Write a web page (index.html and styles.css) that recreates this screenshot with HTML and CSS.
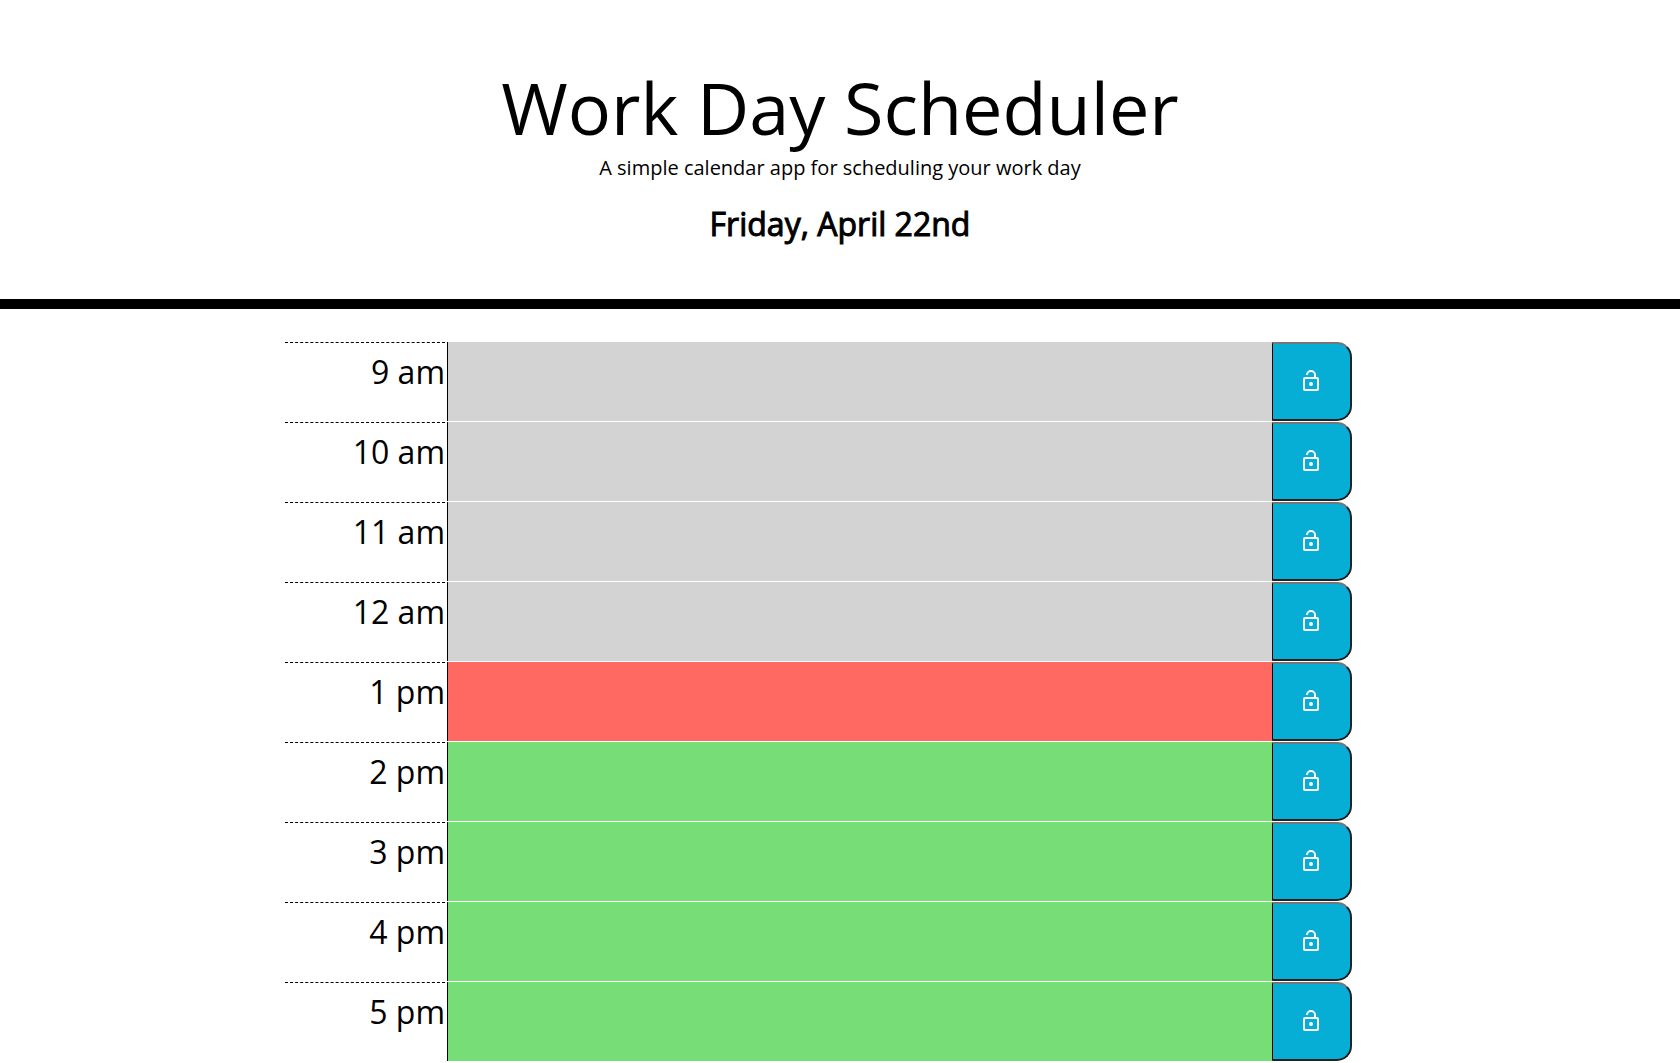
FILE: index.html
```html
<!DOCTYPE html>
<html lang="en">
<head>
<meta charset="utf-8">
<meta name="viewport" content="width=device-width, initial-scale=1">
<title>Work Day Scheduler</title>
<link rel="stylesheet" href="styles.css">
</head>
<body>
<svg class="sprite">
  <symbol id="lock-open" viewBox="0 0 24 24">
    <path fill="currentColor" d="M12 17a2 2 0 1 0 0-4 2 2 0 0 0 0 4zm6-9h-1V6a5 5 0 0 0-10 0h2a3 3 0 0 1 6 0v2H6a2 2 0 0 0-2 2v10a2 2 0 0 0 2 2h12a2 2 0 0 0 2-2V10a2 2 0 0 0-2-2zm0 12H6V10h12v10z"/>
  </symbol>
</svg>
<header class="masthead">
  <h1 class="title">Work Day Scheduler</h1>
  <p class="lead">A simple calendar app for scheduling your work day</p>
  <p class="date">Friday, April 22nd</p>
</header>
<main class="container">
  <div class="row past"><label class="hour" for="h9">9 am</label><textarea class="entry" id="h9"></textarea><button class="save" type="button" aria-label="Save 9 am"><svg class="icon"><use href="#lock-open"/></svg></button></div>
  <div class="row past"><label class="hour" for="h10">10 am</label><textarea class="entry" id="h10"></textarea><button class="save" type="button" aria-label="Save 10 am"><svg class="icon"><use href="#lock-open"/></svg></button></div>
  <div class="row past"><label class="hour" for="h11">11 am</label><textarea class="entry" id="h11"></textarea><button class="save" type="button" aria-label="Save 11 am"><svg class="icon"><use href="#lock-open"/></svg></button></div>
  <div class="row past"><label class="hour" for="h12">12 am</label><textarea class="entry" id="h12"></textarea><button class="save" type="button" aria-label="Save 12 am"><svg class="icon"><use href="#lock-open"/></svg></button></div>
  <div class="row present"><label class="hour" for="h13">1 pm</label><textarea class="entry" id="h13"></textarea><button class="save" type="button" aria-label="Save 1 pm"><svg class="icon"><use href="#lock-open"/></svg></button></div>
  <div class="row future"><label class="hour" for="h14">2 pm</label><textarea class="entry" id="h14"></textarea><button class="save" type="button" aria-label="Save 2 pm"><svg class="icon"><use href="#lock-open"/></svg></button></div>
  <div class="row future"><label class="hour" for="h15">3 pm</label><textarea class="entry" id="h15"></textarea><button class="save" type="button" aria-label="Save 3 pm"><svg class="icon"><use href="#lock-open"/></svg></button></div>
  <div class="row future"><label class="hour" for="h16">4 pm</label><textarea class="entry" id="h16"></textarea><button class="save" type="button" aria-label="Save 4 pm"><svg class="icon"><use href="#lock-open"/></svg></button></div>
  <div class="row future"><label class="hour" for="h17">5 pm</label><textarea class="entry" id="h17"></textarea><button class="save" type="button" aria-label="Save 5 pm"><svg class="icon"><use href="#lock-open"/></svg></button></div>
</main>
</body>
</html>
```
FILE: styles.css
```css
* { box-sizing: border-box; }

body {
  margin: 0;
  background: #fff;
  color: #000;
  font-family: "Open Sans", sans-serif;
}

.sprite {
  position: absolute;
  width: 0;
  height: 0;
}

.masthead {
  padding: 67px 24px 56px;
  border-bottom: 10px solid #000;
  text-align: center;
}

.title, .lead, .date { margin: 0; }

.title {
  font-size: 72px;
  font-weight: 400;
  line-height: 80px;
}

.lead {
  padding-bottom: 16px;
  font-size: 20px;
  line-height: 42px;
}

.date {
  font-size: 32px;
  line-height: 38px;
  -webkit-text-stroke: 1px #000;
}

.container {
  max-width: 1140px;
  margin: 33px auto 0;
  padding: 0 58px 0 15px;
}

.row {
  display: grid;
  grid-template-columns: 160px minmax(0, 1fr) 80px;
  height: 80px;
}

.hour {
  padding-top: 8px;
  border-top: 1px dashed #000;
  font-size: 32px;
  line-height: 42px;
  text-align: right;
}

.entry {
  height: 79px;
  margin-left: 2px;
  padding: 8px;
  border: 0;
  border-left: 1px solid #000;
  border-radius: 0;
  outline: 0;
  resize: none;
  font: inherit;
}

.past .entry { background: #d3d3d3; }
.present .entry { background: #ff6961; }
.future .entry { background: #77dd77; }

.save {
  display: flex;
  align-items: center;
  justify-content: center;
  height: 79px;
  padding: 0 1px 1px 0;
  border: 2px solid #212121;
  border-top-color: #767676;
  border-left: 1px solid #000;
  border-radius: 0 15px 15px 0;
  background: #06aed5;
  color: #fff;
}

.icon { width: 24px; height: 24px; }
```
